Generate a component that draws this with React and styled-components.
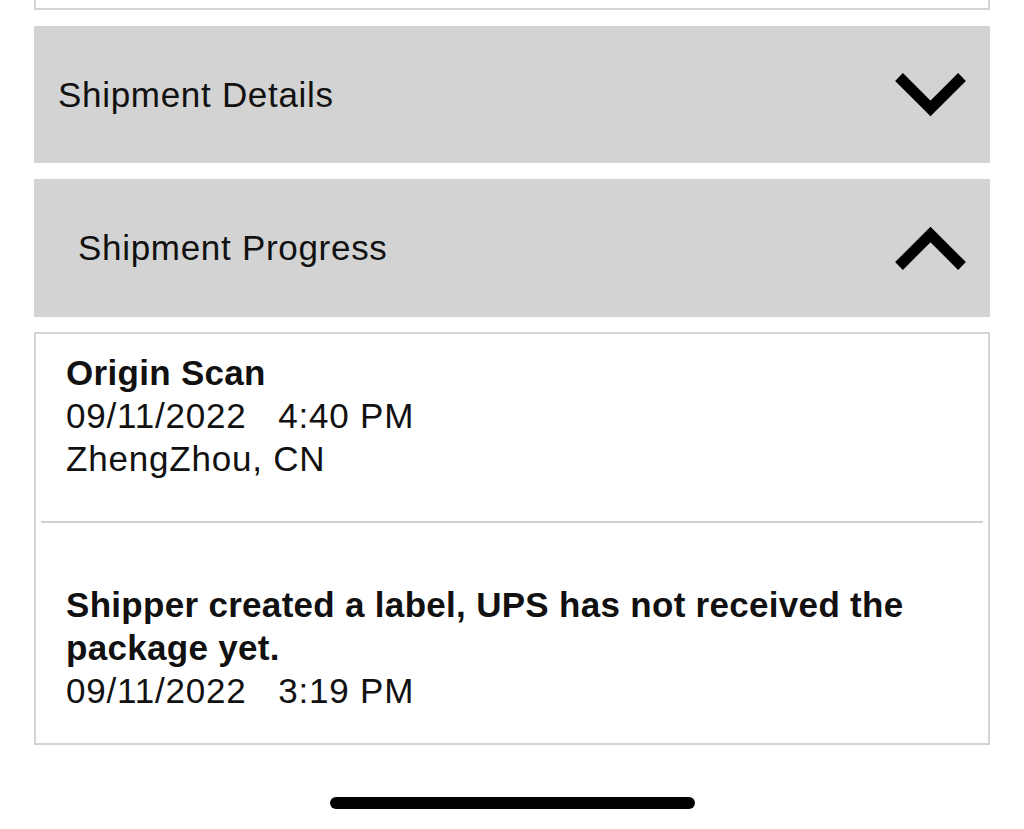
import React from "react";
import styled, { createGlobalStyle } from "styled-components";

const GlobalStyle = createGlobalStyle`
  body {
    margin: 0;
    background: #fff;
    font-family: "Liberation Sans", Arial, sans-serif;
    color: #111;
  }
`;

const Page = styled.div`
  width: 1024px;
  height: 829px;
  overflow: hidden;
  display: flex;
  flex-direction: column;
  padding: 0 34px;
  box-sizing: border-box;
`;

const CutCard = styled.div`
  height: 10px;
  border: 2px solid #d4d4d4;
  border-top: none;
  box-sizing: border-box;
  background: #fff;
`;

const Header = styled.div`
  margin-top: 16px;
  height: ${(p) => p.$height}px;
  background: #d3d3d3;
  display: flex;
  align-items: center;
  justify-content: space-between;
  padding: 0 24px 0 ${(p) => p.$indent}px;
  box-sizing: border-box;
`;

const HeaderTitle = styled.span`
  font-size: 35px;
  letter-spacing: 0.7px;
`;

const Panel = styled.div`
  margin-top: 15px;
  border: 2px solid #d4d4d4;
  padding: 0 5px;
  box-sizing: border-box;
`;

const Event = styled.div`
  padding: ${(p) => p.$top}px 0 ${(p) => p.$bottom}px 25px;
  border-bottom: ${(p) => (p.$last ? "none" : "2px solid #d6cfcf")};
  font-size: 35px;
  line-height: 43px;
`;

const EventTitle = styled.div`
  font-weight: 700;
  letter-spacing: 0.3px;
`;

const EventLine = styled.div`
  white-space: pre;
  letter-spacing: 0.8px;
`;

const Footer = styled.div`
  display: flex;
  justify-content: center;
  padding-top: 52px;
`;

const HomeBar = styled.div`
  width: 365px;
  height: 12px;
  border-radius: 6px;
  background: #000;
`;

const Chevron = ({ up }) => (
  <svg width="71" height="44" viewBox="0 0 71 44">
    <polyline
      points={up ? "4,40 35.5,8.5 67,40" : "4,4 35.5,35.5 67,4"}
      fill="none"
      stroke="#000"
      strokeWidth="11"
      strokeLinejoin="miter"
      strokeLinecap="butt"
    />
  </svg>
);

const events = [
  {
    title: "Origin Scan",
    lines: ["09/11/2022   4:40 PM", "ZhengZhou, CN"],
    top: 17,
    bottom: 41,
  },
  {
    title: "Shipper created a label, UPS has not received the package yet.",
    lines: ["09/11/2022   3:19 PM"],
    top: 60,
    bottom: 31,
  },
];

export default function App() {
  return (
    <>
      <GlobalStyle />
      <Page>
        <CutCard />
        <Header $height={137} $indent={24}>
          <HeaderTitle>Shipment Details</HeaderTitle>
          <Chevron />
        </Header>
        <Header $height={138} $indent={44}>
          <HeaderTitle>Shipment Progress</HeaderTitle>
          <Chevron up />
        </Header>
        <Panel>
          {events.map((e, i) => (
            <Event
              key={i}
              $top={e.top}
              $bottom={e.bottom}
              $last={i === events.length - 1}
            >
              <EventTitle>{e.title}</EventTitle>
              {e.lines.map((l) => (
                <EventLine key={l}>{l}</EventLine>
              ))}
            </Event>
          ))}
        </Panel>
        <Footer>
          <HomeBar />
        </Footer>
      </Page>
    </>
  );
}
